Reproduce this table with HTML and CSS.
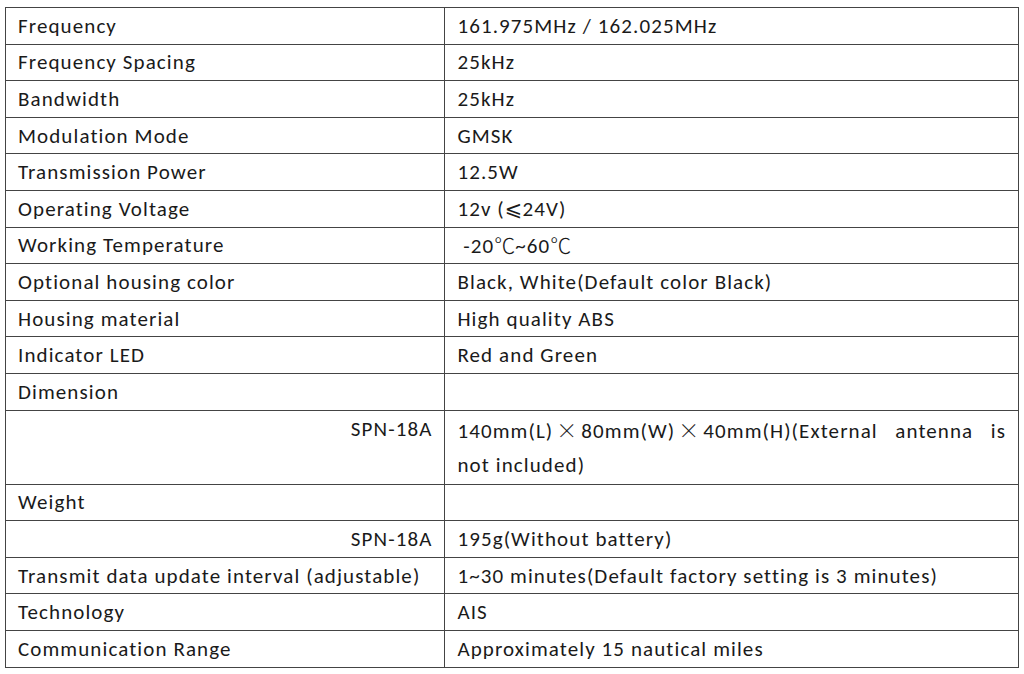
FILE: index.html
```html
<!DOCTYPE html>
<html>
<head>
<meta charset="utf-8">
<link rel="stylesheet" href="styles.css">
</head>
<body>
<table class="spec">
<colgroup><col class="c1"><col class="c2"></colgroup>
<tr><td>Frequency</td><td>161.975MHz / 162.025MHz</td></tr>
<tr><td>Frequency Spacing</td><td>25kHz</td></tr>
<tr><td>Bandwidth</td><td>25kHz</td></tr>
<tr><td>Modulation Mode</td><td>GMSK</td></tr>
<tr><td>Transmission Power</td><td>12.5W</td></tr>
<tr><td>Operating Voltage</td><td>12v (<span class="sym">⩽</span>24V)</td></tr>
<tr><td>Working Temperature</td><td>&nbsp;-20<span class="cjk">℃</span>~60<span class="cjk">℃</span></td></tr>
<tr><td>Optional housing color</td><td>Black, White(Default color Black)</td></tr>
<tr><td>Housing material</td><td>High quality ABS</td></tr>
<tr><td>Indicator LED</td><td>Red and Green</td></tr>
<tr><td>Dimension</td><td></td></tr>
<tr class="tall"><td class="right top">SPN-18A</td><td class="just">140mm(L)<span class="cjk x">×</span>80mm(W)<span class="cjk x">×</span>40mm(H)(External antenna is not included)</td></tr>
<tr><td>Weight</td><td></td></tr>
<tr><td class="right">SPN-18A</td><td>195g(Without battery)</td></tr>
<tr><td>Transmit data update interval (adjustable)</td><td>1~30 minutes(Default factory setting is 3 minutes)</td></tr>
<tr><td>Technology</td><td>AIS</td></tr>
<tr><td>Communication Range</td><td>Approximately 15 nautical miles</td></tr>
</table>
</body>
</html>
```
FILE: styles.css
```css
html, body { margin: 0; padding: 0; background: #fff; }
body { padding: 7px 0 0 5px; }
.spec {
  border-collapse: collapse;
  width: 1014px;
  font-family: Carlito, Lato, "Open Sans", sans-serif;
  font-size: 21px;
  letter-spacing: 1.1px;
  color: #1a1a1a;
}
.c1 { width: 440px; }
.c2 { width: 574px; }
.spec td {
  border: 1px solid #444;
  height: 36.6px;
  padding: 0 12px;
  box-sizing: border-box;
  line-height: 24px;
  vertical-align: middle;
}
.spec tr.tall td { height: 72px; line-height: 34px; padding-top: 1px; padding-bottom: 2px; }
.spec td.right { text-align: right; padding-right: 12px; }
.spec td.top { vertical-align: top; }
.spec td.just { text-align: justify; }
.cjk { font-family: "Noto Sans CJK SC", sans-serif; font-weight: 300; letter-spacing: 0; }
.x { margin: 0 4px 0 3px; }
.sym { font-family: "DejaVu Sans", sans-serif; letter-spacing: 0; }
```
